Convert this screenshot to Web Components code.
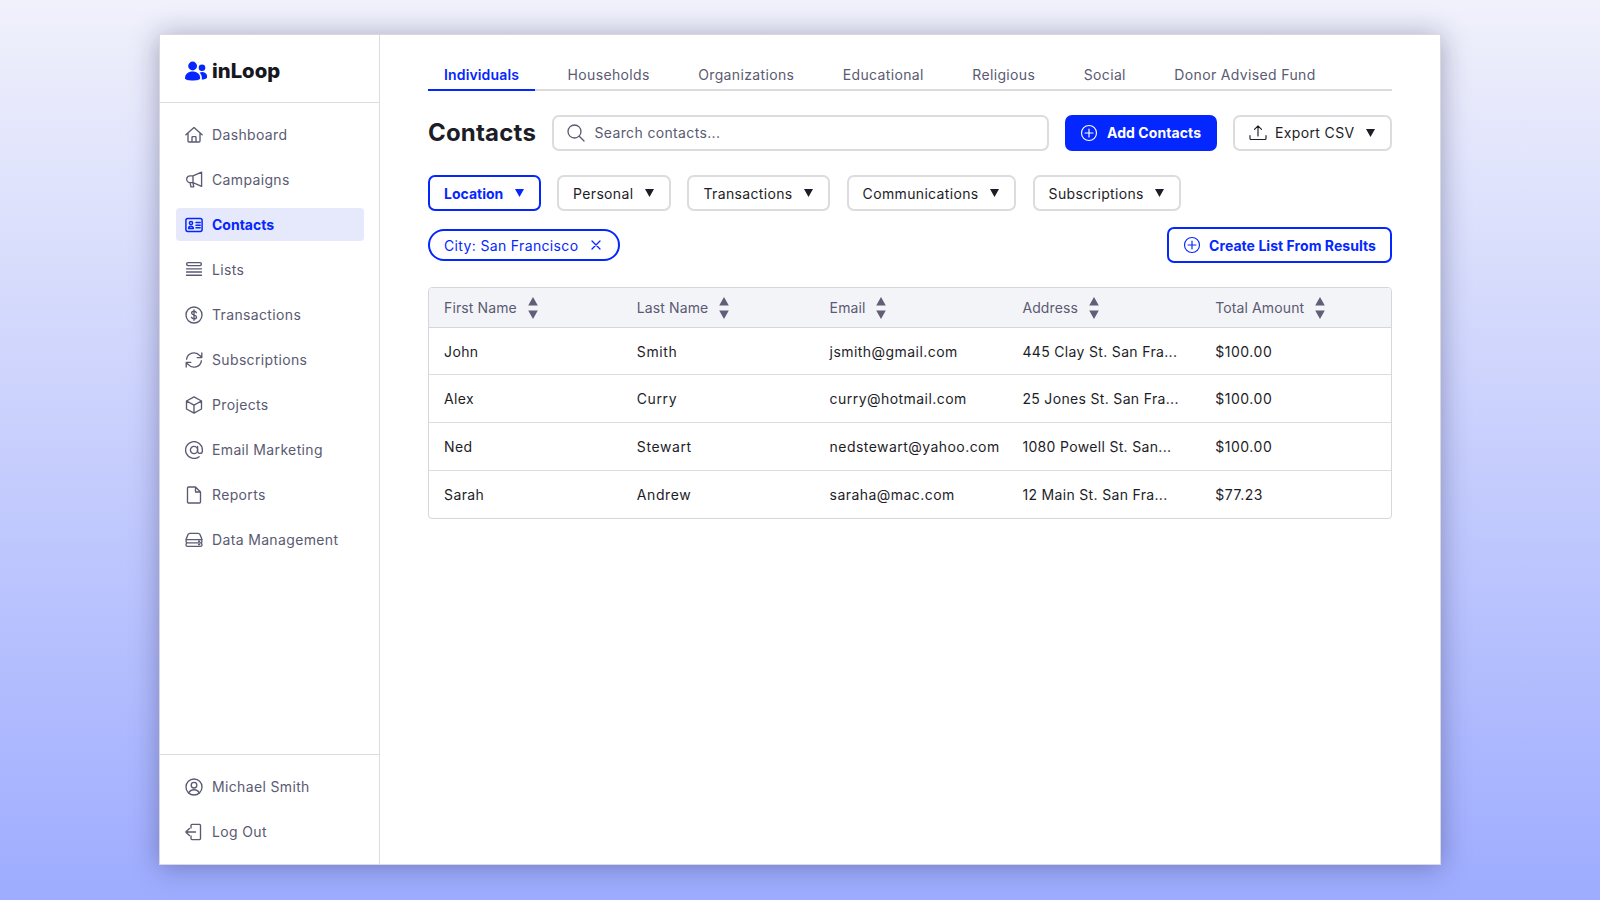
<!DOCTYPE html>
<html lang="en"><head><meta charset="utf-8"><title>inLoop Contacts</title>
<style>
html,body{margin:0;height:100%}
body{height:900px;box-sizing:border-box;padding-top:34px;overflow:hidden;background:linear-gradient(180deg,#f0f1fb 0%,#9eacff 100%);font-family:Inter,"Liberation Sans",sans-serif;font-size:14px;color:#1d1d28;display:flex;align-items:flex-start;justify-content:center}
</style></head><body>
<app-window>
  <side-bar slot="side">
    <brand-logo slot="brand">inLoop</brand-logo>
    <nav-item icon="home">Dashboard</nav-item>
    <nav-item icon="mega">Campaigns</nav-item>
    <nav-item icon="card" active>Contacts</nav-item>
    <nav-item icon="list">Lists</nav-item>
    <nav-item icon="dollar">Transactions</nav-item>
    <nav-item icon="sync">Subscriptions</nav-item>
    <nav-item icon="box">Projects</nav-item>
    <nav-item icon="at">Email Marketing</nav-item>
    <nav-item icon="file">Reports</nav-item>
    <nav-item icon="data">Data Management</nav-item>
    <nav-item slot="foot" icon="user">Michael Smith</nav-item>
    <nav-item slot="foot" icon="logout">Log Out</nav-item>
  </side-bar>
  <tab-bar>
    <tab-item active>Individuals</tab-item><tab-item>Households</tab-item><tab-item>Organizations</tab-item><tab-item>Educational</tab-item><tab-item>Religious</tab-item><tab-item>Social</tab-item><tab-item>Donor Advised Fund</tab-item>
  </tab-bar>
  <tool-row>
    <page-title>Contacts</page-title>
    <search-box placeholder="Search contacts..."></search-box>
    <ui-button variant="solid" icon="plus">Add Contacts</ui-button>
    <ui-button icon="upload" caret>Export CSV</ui-button>
  </tool-row>
  <filter-row>
    <ui-button variant="active" caret>Location</ui-button>
    <ui-button caret>Personal</ui-button>
    <ui-button caret>Transactions</ui-button>
    <ui-button caret>Communications</ui-button>
    <ui-button caret>Subscriptions</ui-button>
  </filter-row>
  <chip-row>
    <filter-chip>City: San Francisco</filter-chip>
    <ui-button variant="outline" icon="plus">Create List From Results</ui-button>
  </chip-row>
  <contact-table></contact-table>
</app-window>
<script>
const ICONS={
home:'<path d="M.9 8.800 9 1.600l8.100 7.200M3 7.200V15a1 1 0 0 0 1 1h10a1 1 0 0 0 1-1V7.200M7 16v-4.600a.8.8 0 0 1 .8-.8h2.400a.8.8 0 0 1 .8.8V16"/>',
mega:'<path d="M16.600 1.200v14.200L8 11.600H5.100a3.400 3.400 0 0 1 0-6.800H8zM8 4.800v6.800M5 11.600l1 4.200h2.800L7.900 11.700"/>',
card:'<rect x=".9" y="2.600" width="16.200" height="12.800" rx="1.800"/><circle cx="6" cy="7" r="1.600"/><path d="M3.600 12.600c0-3 4.800-3 4.800 0zM11 6.600h4.200M11 9.200h4.200M11 11.800h4.200"/>',
list:'<rect x="1.600" y="1.600" width="14.800" height="3" rx="1.500"/><path d="M1.500 7.800h15M1.500 11h15M1.500 14.200h15"/>',
dollar:'<circle cx="9" cy="9" r="8"/><path d="M11.400 6.700C11 5.700 10 5.200 9 5.200c-1.400 0-2.400.8-2.400 1.900 0 2.600 4.900 1.300 4.900 3.800 0 1.100-1 1.900-2.500 1.900-1.100 0-2.100-.5-2.500-1.500M9 3.800v10.400"/>',
sync:'<path d="M1.600 8.200A7.500 7.500 0 0 1 14.800 4.600L16.800 6.600M16.800 2v4.600h-4.600M16.400 9.800A7.500 7.500 0 0 1 3.200 13.400L1.200 11.400M1.200 16v-4.600h4.600"/>',
box:'<path d="M9 .9l7.500 4.100v8L9 17.100 1.500 13V5zM1.600 5 9 9.100 16.400 5M9 9.100v8"/>',
at:'<circle cx="9" cy="9" r="3.600"/><path d="M12.600 5.400V10a2.400 2.400 0 0 0 4.800 0V9a8.400 8.400 0 1 0-3.300 6.700"/>',
file:'<path d="M4 1h7l5 5v10a1 1 0 0 1-1 1H4a1 1 0 0 1-1-1V2a1 1 0 0 1 1-1zM11 1v5h5" transform="translate(-.5 0)"/>',
data:'<path d="M1 8.600 3 3.600A2 2 0 0 1 4.800 2.400h8.400A2 2 0 0 1 15 3.600l2 5M2.600 8.600h12.800A1.600 1.600 0 0 1 17 10.200v0A1.600 1.600 0 0 1 15.400 11.800H2.600A1.600 1.600 0 0 1 1 10.200v0A1.600 1.600 0 0 1 2.600 8.600zM2.600 11.800h12.800A1.600 1.600 0 0 1 17 13.400v.3a1.600 1.600 0 0 1-1.600 1.600H2.600A1.600 1.600 0 0 1 1 13.700v-.3a1.600 1.600 0 0 1 1.600-1.600zM13.600 10.200h1M13.600 13.500h1"/>',
user:'<circle cx="9" cy="9" r="8"/><circle cx="9" cy="7.200" r="2.800"/><path d="M3.700 15c1-2.300 3-3.300 5.300-3.300s4.300 1 5.300 3.300"/>',
logout:'<path d="M6 5V2.400a1 1 0 0 1 1-1h7.500a1 1 0 0 1 1 1v13.200a1 1 0 0 1-1 1H7a1 1 0 0 1-1-1V13M10.500 9H1M4.400 5.400.8 9l3.600 3.600"/>',
plus:'<circle cx="9" cy="9" r="7.500"/><path d="M9 5v8M5 9h8"/>',
upload:'<path d="M1 11.500v3a1 1 0 0 0 1 1h14a1 1 0 0 0 1-1v-3M9 12V2M5.500 5.300 9 1.800l3.500 3.500"/>'
};
const svg=(n,s=18,w=1.35)=>`<svg width="${s}" height="${s}" viewBox="0 0 18 18" fill="none" stroke="currentColor" stroke-width="${w}" stroke-linecap="round" stroke-linejoin="round" aria-hidden="true">${ICONS[n]}</svg>`;
const caret=`<svg width="9" height="8" viewBox="0 0 9 8" aria-hidden="true"><path d="M0 0h9L4.500 8z" fill="currentColor"/></svg>`;
class Base extends HTMLElement{
  constructor(){super();this.attachShadow({mode:'open'});}
  connectedCallback(){this.render&&this.render();}
}
const def=(name,css,html)=>customElements.define(name,class extends Base{
  render(){this.shadowRoot.innerHTML=`<style>${css}</style>`+(typeof html==='function'?html(this):html);}
});
def('app-window',`:host{display:grid;grid-template-columns:220px 1fr;width:1282px;height:831px;box-sizing:border-box;background:#fff;border:1px solid #d9d9df;box-shadow:0 2px 26px rgba(20,20,70,.35)}
 main{padding:0 48px;display:flex;flex-direction:column;min-width:0}`,`<slot name="side"></slot><main><slot></slot></main>`);
def('side-bar',`:host{display:flex;flex-direction:column;border-right:1px solid #dcdcdf;box-sizing:border-box;width:220px;height:829px}
 header{height:68px;box-sizing:border-box;border-bottom:1px solid #dcdcdf;display:flex;align-items:center;padding:4px 0 0 25px;flex:none}
 nav{flex:1;display:flex;flex-direction:column;gap:12px;padding:15px 15px 15px 16px}
 footer{flex:none;border-top:1px solid #dcdcdf;display:flex;flex-direction:column;gap:12px;padding:15px 15px 16px 16px}`,
 `<header><slot name="brand"></slot></header><nav><slot></slot></nav><footer><slot name="foot"></slot></footer>`);
def('brand-logo',`:host{display:flex;align-items:center;gap:5px;font-size:20.300px;font-weight:800;color:#17171f;letter-spacing:0;line-height:24px}
 svg{display:block;flex:none}`,`<svg width="22" height="20" viewBox="0 0 22 20" fill="#0527ff" aria-hidden="true"><circle cx="7.600" cy="5" r="4.400"/><circle cx="17" cy="6.800" r="3.300"/><path d="M0 17.500C0 12.800 3.400 10.600 7.600 10.600s7.600 2.200 7.600 6.900c0 1-3.200 2-7.600 2S0 18.500 0 17.500z"/><path d="M16.500 18.500c.3-.4.400-.7.400-1.100 0-2.400-.8-4.400-2.300-5.700.8-.5 1.700-.7 2.600-.7 3 0 5 2 5 5 0 1.300-2.500 2.400-5.700 2.500z"/></svg><slot></slot>`);
def('nav-item',`:host{display:flex;align-items:center;gap:9px;height:33px;padding-left:9px;border-radius:4px;color:#5a5a72;font-size:14px;letter-spacing:.35px;flex:none}
 :host([active]){background:#e6e9fc;color:#0527ff;font-weight:700;letter-spacing:0}
 svg{display:block;flex:none}`,h=>svg(h.getAttribute('icon'),18,h.hasAttribute('active')?1.5:1.35)+`<slot></slot>`);
def('tab-bar',`:host{display:flex;gap:16.500px;margin-top:21px;height:35px;box-sizing:border-box;border-bottom:2px solid #dcdcdf;flex:none}`,`<slot></slot>`);
def('tab-item',`:host{display:block;padding:0 16px;height:35px;box-sizing:border-box;line-height:38px;color:#5a5a72;letter-spacing:.35px;white-space:nowrap}
 :host([active]){color:#0527ff;font-weight:600;letter-spacing:.15px;border-bottom:2px solid #0527ff}`,`<slot></slot>`);
def('tool-row',`:host{display:flex;align-items:center;gap:16px;margin-top:24px;height:36px;flex:none;--nudge:1px}`,`<slot></slot>`);
def('page-title',`:host{display:block;font-size:24px;font-weight:700;color:#1d1d28;line-height:36px;white-space:nowrap;letter-spacing:.2px}`,`<slot></slot>`);
def('search-box',`:host{flex:1;display:flex;align-items:center;gap:9.500px;height:36px;box-sizing:border-box;border:2px solid #dcdcdf;border-radius:7px;padding:0 0 var(--nudge,0) 13px;color:#5a5a72;letter-spacing:.35px}
 svg{display:block;flex:none}`,h=>`<svg width="18" height="18" viewBox="0 0 18 18" fill="none" stroke="currentColor" stroke-width="1.300" stroke-linecap="round"><circle cx="7.500" cy="7.500" r="6.500"/><path d="M12.300 12.300 17 17"/></svg><span>${h.getAttribute('placeholder')}</span>`);
def('ui-button',`:host{display:inline-flex;align-items:center;height:36px;box-sizing:border-box;border:2px solid #dcdcdf;border-radius:7px;padding:0 14px var(--nudge,0) 14px;gap:8px;color:#1d1d28;background:#fff;white-space:nowrap;letter-spacing:.35px;flex:none}
 :host([caret]){padding-right:15px}
 :host([caret]) .c{margin-left:3.500px}
 :host([variant=active]) .c{margin-left:3.300px}
 :host([variant=solid]){background:#0527ff;border-color:#0527ff;color:#fff;font-weight:700;letter-spacing:.08px;padding-left:13px;padding-right:14px;gap:9px}
 :host([variant=active]){border-color:#0527ff;color:#0527ff;font-weight:700;letter-spacing:0}
 :host([variant=outline]){border-color:#0527ff;color:#0527ff;font-weight:700;letter-spacing:.05px;margin-left:auto}
 svg{display:block;flex:none}`,h=>(h.getAttribute('icon')?svg(h.getAttribute('icon'),18,1.15):'')+`<slot></slot>`+(h.hasAttribute('caret')?`<span class="c">${caret}</span>`:''));
def('filter-row',`:host{display:flex;gap:16.500px;margin-top:24px;flex:none}`,`<slot></slot>`);
def('chip-row',`:host{display:flex;align-items:center;margin-top:16px;height:36px;flex:none}`,`<slot></slot>`);
def('filter-chip',`:host{display:inline-flex;align-items:center;gap:13px;height:32px;box-sizing:border-box;border:2px solid #0527ff;border-radius:16px;padding:0 17px 0 14px;color:#0527ff;letter-spacing:.35px;white-space:nowrap}
 svg{display:block}`,`<slot></slot><svg width="10" height="10" viewBox="0 0 10 10" stroke="currentColor" stroke-width="1.300" stroke-linecap="round"><path d="M1 1l8 8M9 1 1 9"/></svg>`);
const COLS=['First Name','Last Name','Email','Address','Total Amount'];
const ROWS=[['John','Smith','jsmith@gmail.com','445 Clay St. San Fra...','$100.00'],['Alex','Curry','curry@hotmail.com','25 Jones St. San Fra...','$100.00'],['Ned','Stewart','nedstewart@yahoo.com','1080 Powell St. San...','$100.00'],['Sarah','Andrew','saraha@mac.com','12 Main St. San Fra...','$77.23']];
def('contact-table',`:host{display:block;margin-top:24px;border:1px solid #d6d6dc;border-radius:4px;overflow:hidden;height:232px;box-sizing:border-box;flex:none}
 .r{display:grid;grid-template-columns:repeat(4,192.800px) 1fr;align-items:center;height:47px;border-bottom:1px solid #dcdcdf;box-sizing:content-box}
 .h+.r{height:46px}
 .r:last-child{border-bottom:0}
 .h{height:39px;background:#f3f4f8;color:#5a5a72;border-bottom:1px solid #d6d6dc}
 .r>div{padding-left:15px;letter-spacing:.4px;white-space:nowrap}
 .r>div:nth-child(2){letter-spacing:.6px}
 .r>div:nth-child(3){letter-spacing:.45px}
 .r>div:nth-child(4){letter-spacing:.33px}
 .r>div:nth-child(5){letter-spacing:.55px}
 .r.h>div{display:flex;align-items:center;gap:10.800px;letter-spacing:.12px}
 svg{display:block;flex:none}`,
 `<div class="r h">${COLS.map(c=>`<div><span>${c}</span><svg width="10" height="22" viewBox="0 0 10 22" fill="#5f5f78"><path d="M5 0l4.800 8.500H.2zM.2 13.500h9.600L5 22z"/></svg></div>`).join('')}</div>`+ROWS.map(r=>`<div class="r">${r.map(c=>`<div>${c}</div>`).join('')}</div>`).join(''));
</script>
</body></html>
